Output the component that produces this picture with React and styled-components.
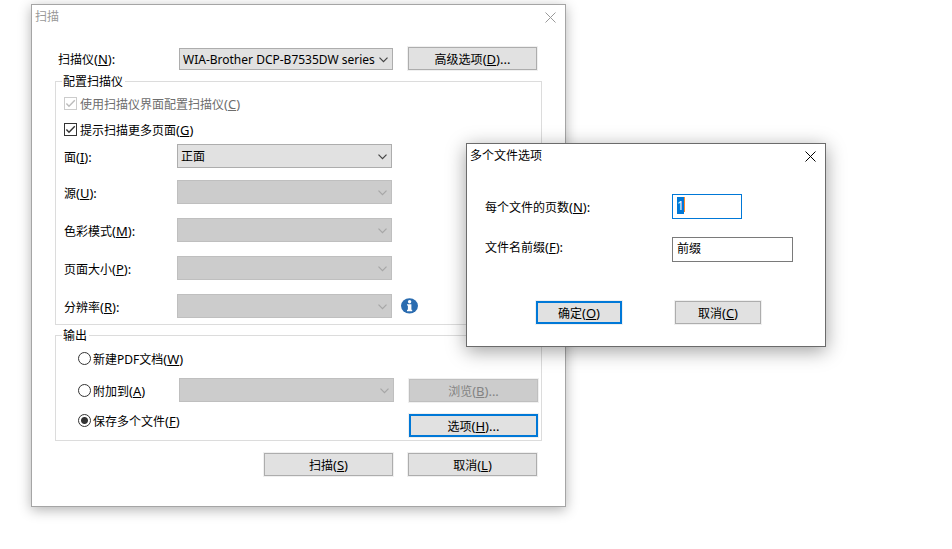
import styled, { createGlobalStyle, css } from 'styled-components';
import { useEffect, useRef, useState } from 'react';

const settings = [
  { id: 'side', name: '面', hotkey: 'I', value: '正面' },
  { id: 'source', name: '源', hotkey: 'U' },
  { id: 'color', name: '色彩模式', hotkey: 'M' },
  { id: 'size', name: '页面大小', hotkey: 'P' },
  { id: 'dpi', name: '分辨率', hotkey: 'R', info: true },
];

const Caption = ({ name, hotkey, end = '' }) => (
  <CaptionText>
    {name}
    <Hotkey>
      (<u>{hotkey}</u>){end}
    </Hotkey>
  </CaptionText>
);

const CloseIcon = () => (
  <svg width="11" height="11" viewBox="0 0 11 11" fill="none" stroke="currentColor">
    <path d="M0.5 0.5 10.5 10.5M10.5 0.5 0.5 10.5" />
  </svg>
);

const InfoIcon = () => (
  <svg width="17" height="16" viewBox="0 0 17 16">
    <ellipse cx="8.5" cy="7.8" rx="8.5" ry="7.6" fill="#2a6cb0" />
    <circle cx="8.6" cy="3.7" r="1.7" fill="#fff" />
    <path d="M6 6.2H10.4V11.8H11.2V13.2H6V11.8H6.9V7.5H6Z" fill="#fff" />
  </svg>
);

const Dropdown = ({ id, value = '', label, small, disabled }) => (
  <SelectBox $disabled={disabled}>
    <Select id={id} aria-label={label} disabled={disabled} $small={small} defaultValue={value}>
      <option value={value}>{value}</option>
    </Select>
    <svg width="9" height="6" viewBox="0 0 9 6" fill="none" stroke="currentColor" strokeWidth="1.2">
      <path d="M0.5 0.7 4.5 4.7 8.5 0.7" />
    </svg>
  </SelectBox>
);

const Check = ({ name, hotkey, ...rest }) => (
  <CheckLabel $disabled={rest.disabled}>
    <CheckBox>
      <input type="checkbox" {...rest} />
      <svg width="13" height="13" viewBox="0 0 13 13" fill="none" stroke="currentColor" strokeWidth="1.4">
        <path d="M2.4 6.4 5 9.2 10.8 3.2" />
      </svg>
    </CheckBox>
    <Caption name={name} hotkey={hotkey} />
  </CheckLabel>
);

const ScanDialog = () => {
  const [more, setMore] = useState(true);
  const [output, setOutput] = useState('multi');

  const radio = value => ({
    type: 'radio',
    name: 'output',
    checked: output === value,
    onChange: () => setOutput(value),
  });

  return (
    <ScanWindow>
      <TitleBar $inactive>
        <h1>扫描</h1>
        <button aria-label="关闭">
          <CloseIcon />
        </button>
      </TitleBar>
      <ScanBody>
        <ScannerRow>
          <label htmlFor="scanner">
            <Caption name="扫描仪" hotkey="N" end=":" />
          </label>
          <Dropdown id="scanner" small value="WIA-Brother DCP-B7535DW series" />
          <Button>
            <Caption name="高级选项" hotkey="D" end="..." />
          </Button>
        </ScannerRow>
        <Group>
          <legend>配置扫描仪</legend>
          <Check name="使用扫描仪界面配置扫描仪" hotkey="C" defaultChecked disabled />
          <Check name="提示扫描更多页面" hotkey="G" checked={more} onChange={() => setMore(!more)} />
          <Settings>
            {settings.map(item => (
              <SettingRow key={item.id}>
                <label htmlFor={item.id}>
                  <Caption name={item.name} hotkey={item.hotkey} end=":" />
                </label>
                <Dropdown id={item.id} value={item.value} disabled={!item.value} />
                {item.info && <InfoIcon />}
              </SettingRow>
            ))}
          </Settings>
        </Group>
        <Group $tight>
          <legend>输出</legend>
          <OutputGrid>
            <RadioLabel $wide>
              <input {...radio('new')} />
              <Caption name="新建PDF文档" hotkey="W" />
            </RadioLabel>
            <RadioLabel>
              <input {...radio('append')} />
              <Caption name="附加到" hotkey="A" />
            </RadioLabel>
            <Dropdown label="附加到" disabled />
            <Button disabled>
              <Caption name="浏览" hotkey="B" end="..." />
            </Button>
            <RadioLabel $top>
              <input {...radio('multi')} />
              <Caption name="保存多个文件" hotkey="F" />
            </RadioLabel>
            <Button $primary>
              <Caption name="选项" hotkey="H" end="..." />
            </Button>
          </OutputGrid>
        </Group>
        <Actions>
          <Button>
            <Caption name="扫描" hotkey="S" />
          </Button>
          <Button>
            <Caption name="取消" hotkey="L" />
          </Button>
        </Actions>
      </ScanBody>
    </ScanWindow>
  );
};

const OptionsDialog = () => {
  const pages = useRef(null);

  useEffect(() => {
    pages.current.focus();
    pages.current.select();
  }, []);

  return (
    <OptionsWindow>
      <TitleBar>
        <h1>多个文件选项</h1>
        <button aria-label="关闭">
          <CloseIcon />
        </button>
      </TitleBar>
      <OptionsForm onSubmit={e => e.preventDefault()}>
        <Field>
          <label htmlFor="pages">
            <Caption name="每个文件的页数" hotkey="N" end=":" />
          </label>
          <CaretBox>
            <TextInput id="pages" ref={pages} defaultValue="1" $short />
          </CaretBox>
        </Field>
        <Field $top>
          <label htmlFor="prefix">
            <Caption name="文件名前缀" hotkey="F" end=":" />
          </label>
          <TextInput id="prefix" defaultValue="前缀" />
        </Field>
        <OptionsActions>
          <Button $primary $narrow>
            <Caption name="确定" hotkey="O" />
          </Button>
          <Button type="button" $narrow>
            <Caption name="取消" hotkey="C" />
          </Button>
        </OptionsActions>
      </OptionsForm>
    </OptionsWindow>
  );
};

const App = () => (
  <Desktop>
    <GlobalStyle />
    <ScanDialog />
    <OptionsDialog />
  </Desktop>
);
export default App;

const GlobalStyle = createGlobalStyle`
  * {
    box-sizing: border-box;
  }
  body {
    margin: 0;
    background: #ffffff;
    color: #000000;
  }
  body, button, input, select {
    font-family: 'Noto Sans', 'Noto Sans CJK SC', sans-serif;
    font-size: 12px;
    line-height: 16px;
  }
  u {
    text-underline-offset: 1px;
  }
  svg {
    display: block;
    flex: none;
  }
`;

const CaptionText = styled.span`
  display: inline-block;
  padding-top: 2px;
  vertical-align: top;
  white-space: nowrap;
`;

const Hotkey = styled.span`
  font-size: 13px;
`;

const Desktop = styled.main`
  position: relative;
  min-height: 100vh;
  padding: 4px 31px;
`;

const Window = styled.section`
  background: #ffffff;
`;

const ScanWindow = styled(Window)`
  width: 535px;
  border: 1px solid #a5a5a5;
  box-shadow: 0 3px 12px rgba(0, 0, 0, 0.3);
`;

const OptionsWindow = styled(Window)`
  position: absolute;
  left: 466px;
  top: 143px;
  width: 360px;
  border: 1px solid #6b6b6b;
  box-shadow: 0 4px 18px rgba(0, 0, 0, 0.38);
`;

const TitleBar = styled.header`
  display: flex;
  align-items: center;
  justify-content: space-between;
  height: 24px;
  padding: 0 9px 0 3px;
  color: ${({ $inactive }) => ($inactive ? '#999999' : '#000000')};
  h1 {
    margin: 0;
    font-size: 12px;
    font-weight: normal;
  }
  button {
    padding: 0;
    border: 0;
    background: none;
    color: inherit;
  }
`;

const ScanBody = styled.div`
  padding: 18px 23px 30px;
`;

const ScannerRow = styled.div`
  display: grid;
  grid-template-columns: 121px 214px 129px;
  align-items: center;
  padding-left: 3px;
  margin-bottom: 3px;
  button {
    margin-left: 15px;
  }
`;

const SelectBox = styled.div`
  position: relative;
  width: 215px;
  max-width: 100%;
  color: ${({ $disabled }) => ($disabled ? '#a6a6a6' : '#444444')};
  svg {
    position: absolute;
    right: 5px;
    top: calc(50% - 2px);
    pointer-events: none;
  }
`;

const Select = styled.select`
  appearance: none;
  display: block;
  width: 100%;
  height: ${({ $small }) => ($small ? '22px' : '24px')};
  padding: 2px 0 0 3px;
  border: 1px solid #adadad;
  border-radius: 0;
  background: #e1e1e1;
  color: #000000;
  &:disabled {
    border-color: #bfbfbf;
    background: #cccccc;
    opacity: 1;
  }
`;

const Button = styled.button`
  width: ${({ $narrow }) => ($narrow ? '86px' : '129px')};
  height: 23px;
  padding: 0;
  border: ${({ $primary }) => ($primary ? '2px solid #0078d7' : '1px solid #adadad')};
  background: #e1e1e1;
  box-shadow: 0 0 0 1px #f0f0f0;
  color: #000000;
  &:disabled {
    border-color: #bfbfbf;
    background: #cccccc;
    color: #838383;
  }
`;

const Group = styled.fieldset`
  min-width: 0;
  margin: 0 0 2px;
  padding: 0 3px ${({ $tight }) => ($tight ? '3px' : '6px')} 8px;
  border: 1px solid #dcdcdc;
  legend {
    height: 17px;
    margin-left: -2px;
    padding: 0 2px 0 1px;
    line-height: 17px;
  }
`;

const row = css`
  display: flex;
  align-items: center;
`;

const CheckLabel = styled.label`
  ${row}
  gap: 3px;
  height: 26px;
  color: ${({ $disabled }) => ($disabled ? '#6d6d6d' : '#000000')};
`;

const CheckBox = styled.span`
  position: relative;
  width: 13px;
  height: 13px;
  color: #333333;
  input {
    appearance: none;
    display: block;
    width: 13px;
    height: 13px;
    margin: 0;
    border: 1px solid #333333;
    background: #ffffff;
  }
  svg {
    position: absolute;
    inset: 0;
    pointer-events: none;
  }
  input:not(:checked) + svg {
    display: none;
  }
  &:has(:disabled) {
    color: #bcbcbc;
    input {
      border-color: #cccccc;
    }
  }
`;

const Settings = styled.div`
  padding-top: 2px;
`;

const SettingRow = styled.div`
  ${row}
  margin-top: 14px;
  &:first-child {
    margin-top: 0;
  }
  &:nth-child(2) {
    margin-top: 12px;
  }
  label {
    width: 113px;
  }
  > svg {
    margin-left: 9px;
  }
`;

const OutputGrid = styled.div`
  display: grid;
  grid-template-columns: 101px 215px 129px;
  grid-template-rows: 28px 36px 29px;
  align-items: center;
  padding-left: 14px;
  button {
    grid-column: 3;
    margin-left: 15px;
  }
  button:last-child {
    align-self: end;
  }
`;

const RadioLabel = styled.label`
  ${row}
  grid-column: 1 / ${({ $wide }) => ($wide ? '-1' : '2')};
  align-self: ${({ $top }) => ($top ? 'start' : 'center')};
  height: 24px;
  gap: 2px;
  white-space: nowrap;
  input {
    appearance: none;
    flex: none;
    width: 13px;
    height: 13px;
    margin: 0;
    border: 1px solid #333333;
    border-radius: 50%;
    background: #ffffff;
  }
  input:checked {
    background: radial-gradient(circle, #333333 3px, #ffffff 4px);
  }
`;

const Actions = styled.div`
  display: flex;
  justify-content: flex-end;
  gap: 15px;
  padding: 10px 5px 0 0;
`;

const OptionsForm = styled.form`
  padding: 26px 32px 22px 18px;
`;

const Field = styled.div`
  display: grid;
  grid-template-columns: 187px 1fr;
  align-items: ${({ $top }) => ($top ? 'start' : 'center')};
  margin-bottom: 18px;
`;

const TextInput = styled.input`
  display: block;
  width: ${({ $short }) => ($short ? '70px' : '121px')};
  height: 25px;
  padding: 0 4px 3px;
  border: 1px solid #7a7a7a;
  border-radius: 0;
  background: #ffffff;
  &:focus {
    border-color: #0078d7;
    outline: none;
  }
  &::selection {
    background: #0078d7;
    color: #ffffff;
  }
`;

const CaretBox = styled.div`
  position: relative;
  &:focus-within::after {
    content: '';
    position: absolute;
    left: 12px;
    top: 3px;
    width: 1px;
    height: 15px;
    background: #ff8728;
  }
`;

const OptionsActions = styled.div`
  display: flex;
  justify-content: flex-end;
  gap: 53px;
  padding: 21px 32px 0 0;
`;
